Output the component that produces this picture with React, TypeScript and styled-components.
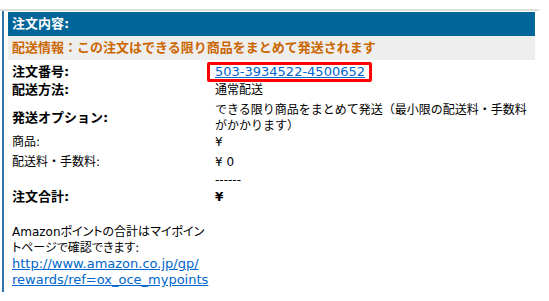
import React from 'react';
import styled, { createGlobalStyle } from 'styled-components';

const GlobalStyle = createGlobalStyle`
  body {
    margin: 0;
    background: #fff;
    color: #000;
    font-family: "DejaVu Sans", "Noto Sans CJK JP", sans-serif;
    font-size: 12px;
  }
`;

const Page = styled.div`
  width: 539px;
  padding-top: 9px;
`;

const TopRule = styled.div`
  height: 2px;
  background: #dedede;
`;

const Frame = styled.div`
  box-sizing: border-box;
  height: 281px;
  margin-left: 2px;
  padding: 1px 0 0 4px;
  border-left: 2px solid #2f74a8;
`;

const Panel = styled.div`
  width: 527px;
`;

const Bar = styled.div<{ $tone: 'head' | 'notice' }>`
  height: 24px;
  padding-left: 4px;
  line-height: 24px;
  font-size: 13px;
  font-weight: bold;
  background: ${({ $tone }) => ($tone === 'head' ? '#006699' : '#eeeeee')};
  color: ${({ $tone }) => ($tone === 'head' ? '#ffffff' : '#cc6600')};
`;

const Row = styled.div<{ $top?: number; $h?: number }>`
  display: grid;
  grid-template-columns: 203px 1fr;
  align-items: center;
  padding-left: 4px;
  margin-top: ${({ $top }) => $top ?? 0}px;
  min-height: ${({ $h }) => $h ?? 16}px;
  line-height: 16px;
`;

const Label = styled.div<{ $bold?: boolean }>`
  font-size: ${({ $bold }) => ($bold ? 13 : 12)}px;
  font-weight: ${({ $bold }) => ($bold ? 'bold' : 'normal')};
`;

const Value = styled.div<{ $bold?: boolean }>`
  font-weight: ${({ $bold }) => ($bold ? 'bold' : 'normal')};
`;

const OrderBox = styled.span`
  display: inline-block;
  margin-left: -8px;
  padding: 0 4px 0 5px;
  border: 3px solid #ff0000;
  border-radius: 2px;
  background: #fff;
  line-height: 14px;
`;

const Link = styled.a`
  color: #0066cc;
  text-decoration: underline;
  font-size: 13px;
`;

const Note = styled.div`
  margin-top: 19px;
  padding-left: 4px;
  line-height: 16px;
  font-feature-settings: "palt";
`;

export default function App() {
  return (
    <>
      <GlobalStyle />
      <Page>
        <TopRule />
        <Frame>
          <Panel>
            <Bar $tone='head'>注文内容:</Bar>
            <Bar $tone='notice'>配送情報：この注文はできる限り商品をまとめて発送されます</Bar>
            <Row $top={2} $h={20}>
              <Label $bold>注文番号:</Label>
              <Value>
                <OrderBox>
                  <Link href='#'>503-3934522-4500652</Link>
                </OrderBox>
              </Value>
            </Row>
            <Row>
              <Label $bold>配送方法:</Label>
              <Value>通常配送</Value>
            </Row>
            <Row $top={4}>
              <Label $bold>発送オプション:</Label>
              <Value>
                できる限り商品をまとめて発送（最小限の配送料・手数料
                <br />
                がかかります）
              </Value>
            </Row>
            <Row>
              <Label>商品:</Label>
              <Value>¥</Value>
            </Row>
            <Row $top={4}>
              <Label>配送料・手数料:</Label>
              <Value>¥ 0</Value>
            </Row>
            <Row $top={2}>
              <Label />
              <Value>------</Value>
            </Row>
            <Row $top={1}>
              <Label $bold>注文合計:</Label>
              <Value $bold>¥</Value>
            </Row>
            <Note>
              Amazonポイントの合計はマイポイン
              <br />
              トページで確認できます:
              <br />
              <Link href='#'>
                http://www.amazon.co.jp/gp/
                <br />
                rewards/ref=ox_oce_mypoints
              </Link>
            </Note>
          </Panel>
        </Frame>
      </Page>
    </>
  );
}
